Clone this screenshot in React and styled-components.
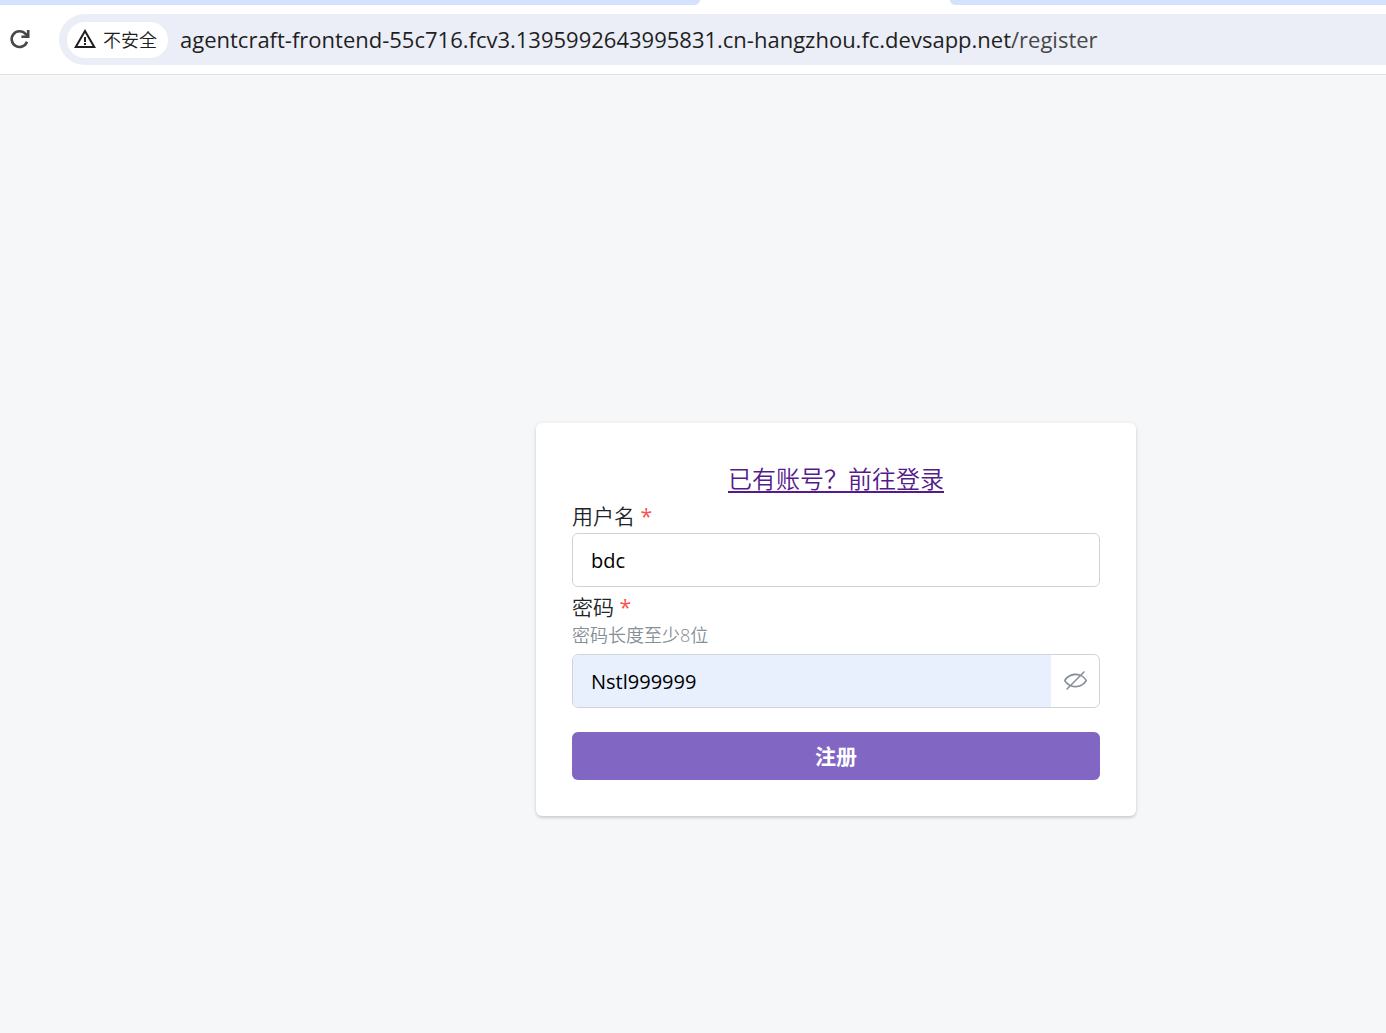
import { useState } from "react";
import { MdWarningAmber } from "react-icons/md";
import styled, { createGlobalStyle } from "styled-components";

const GlobalStyle = createGlobalStyle`
    * {
        box-sizing: border-box;
    }
    body {
        margin: 0;
        background-color: #f6f7f9;
        color: #000000;
        font-family: "Open Sans", "Noto Sans CJK SC", sans-serif;
        font-size: 21px;
    }
    input, button {
        font-family: inherit;
        font-size: inherit;
    }
`;

const Page = styled.div`
    min-height: 100vh;
    display: flex;
    flex-direction: column;
`;

const TabStrip = styled.div`
    display: grid;
    grid-template-columns: 700px 250px 1fr;
    height: 5px;
    background-color: #ffffff;
`;
const Tab = styled.div`
    background-color: ${(props) => (props.$active ? "#ffffff" : "#d3e3fd")};
    border-radius: ${(props) => props.$radius || "0"};
`;

const Toolbar = styled.header`
    display: flex;
    align-items: center;
    gap: 28px;
    height: 70px;
    padding-left: 9px;
    background-color: #ffffff;
    border-bottom: 1px solid #dfe1e5;
`;
const ReloadButton = styled.button`
    display: flex;
    padding: 0;
    border: none;
    background: none;
    color: #474747;
`;
const AddressBar = styled.div`
    flex: 1;
    display: flex;
    align-items: center;
    gap: 12px;
    height: 51px;
    padding-left: 8px;
    border-radius: 26px 0 0 26px;
    background-color: #ebeef7;
`;
const SecurityChip = styled.button`
    display: flex;
    align-items: center;
    gap: 6px;
    height: 36px;
    padding: 0 11px 2px 6px;
    border: none;
    border-radius: 18px;
    background-color: #ffffff;
    color: #1f1f1f;
    && {
        font-size: 18px;
        font-weight: 350;
    }
`;
const Url = styled.span`
    padding-bottom: 2px;
    color: #1f1f1f;
    font-size: 22px;
    white-space: nowrap;
`;
const UrlPath = styled.span`
    color: #474747;
`;

const Main = styled.main`
    flex: 1;
    display: flex;
    align-items: center;
    justify-content: center;
    padding: 131px 0 0 286px;
`;
const Card = styled.form`
    display: flex;
    flex-direction: column;
    width: 600px;
    padding: 36px;
    border-radius: 6px;
    background-color: #ffffff;
    box-shadow: 0 1px 4px rgba(0, 0, 0, 0.1), 0 2px 3px rgba(0, 0, 0, 0.1);
`;
const LoginLink = styled.a`
    align-self: center;
    color: #551a8b;
    font-size: 24px;
    font-weight: 350;
    line-height: 40px;
    text-underline-offset: 3px;
    text-decoration-thickness: 2px;
`;
const Field = styled.div`
    display: flex;
    flex-direction: column;
    margin-bottom: ${(props) => (props.$last ? "24px" : "3px")};
`;
const Label = styled.label`
    color: #212529;
    font-weight: 350;
    line-height: 34px;
`;
const Required = styled.span`
    color: #fa5252;
    font-weight: 400;
`;
const Description = styled.span`
    margin-bottom: 8px;
    color: #868e96;
    font-size: 18px;
    font-weight: 350;
    line-height: 22px;
`;
const InputBox = styled.div`
    display: flex;
    height: 54px;
    border: 1px solid #ced4da;
    border-radius: 6px;
    background-color: #ffffff;
    overflow: hidden;
`;
const Input = styled.input`
    flex: 1;
    min-width: 0;
    padding: 0 18px;
    border: none;
    outline: none;
    background-color: ${(props) => (props.$filled ? "#e8f0fe" : "transparent")};
    color: #000000;
    && {
        font-size: 20px;
    }
`;
const ToggleButton = styled.button`
    display: flex;
    align-items: center;
    justify-content: center;
    width: 48px;
    padding: 0 0 2px;
    border: none;
    background: none;
    color: #868e96;
`;
const SubmitButton = styled.button`
    height: 48px;
    padding-bottom: 4px;
    border: none;
    border-radius: 6px;
    background-color: #8167c3;
    color: #ffffff;
    font-weight: 700;
`;

function ReloadIcon() {
    return (
        <svg width="22" height="22" viewBox="0 0 22 22" fill="none" stroke="currentColor" strokeWidth="2.6">
            <path d="M18 12.8A7.9 7.9 0 1 1 16.6 5L18.8 7.2" />
            <path d="M19.2 1V7.8H12.4" />
        </svg>
    );
}

function EyeOffIcon() {
    return (
        <svg width="23" height="23" viewBox="0 0 15 15" fill="currentColor">
            <path
                fillRule="evenodd"
                clipRule="evenodd"
                d="M13.3536 2.35355C13.5488 2.15829 13.5488 1.84171 13.3536 1.64645C13.1583 1.45118 12.8417 1.45118 12.6464 1.64645L10.6828 3.61012C9.70652 3.21671 8.63759 3 7.5 3C4.30786 3 1.65639 4.70638 0.0760002 7.23501C-0.0253338 7.39715 -0.0253334 7.60288 0.0760014 7.76501C0.902945 9.08812 2.02314 10.1861 3.36061 10.9323L1.64645 12.6464C1.45118 12.8417 1.45118 13.1583 1.64645 13.3536C1.84171 13.5488 2.15829 13.5488 2.35355 13.3536L4.31723 11.3899C5.29348 11.7833 6.36241 12 7.5 12C10.6921 12 13.3436 10.2936 14.924 7.76501C15.0253 7.60288 15.0253 7.39715 14.924 7.23501C14.0971 5.9119 12.9769 4.81391 11.6394 4.06771L13.3536 2.35355ZM9.90428 4.38861C9.15332 4.1361 8.34759 4 7.5 4C4.80285 4 2.52952 5.37816 1.09622 7.50001C1.87284 8.6497 2.89609 9.58106 4.09974 10.1931L9.90428 4.38861ZM5.09572 10.6114L10.9003 4.80685C12.1039 5.41894 13.1272 6.35031 13.9038 7.50001C12.4705 9.62183 10.1971 11 7.5 11C6.65241 11 5.84668 10.8639 5.09572 10.6114Z"
            />
        </svg>
    );
}

function Browser() {
    return (
        <>
            <TabStrip>
                <Tab $radius="0 0 14px 0" />
                <Tab $active />
                <Tab $radius="0 0 0 14px" />
            </TabStrip>
            <Toolbar>
                <ReloadButton type="button" aria-label="Reload">
                    <ReloadIcon />
                </ReloadButton>
                <AddressBar>
                    <SecurityChip type="button">
                        <MdWarningAmber size={24} />
                        不安全
                    </SecurityChip>
                    <Url>
                        agentcraft-frontend-55c716.fcv3.1395992643995831.cn-hangzhou.fc.devsapp.net
                        <UrlPath>/register</UrlPath>
                    </Url>
                </AddressBar>
            </Toolbar>
        </>
    );
}

function App() {
    const [username, setUsername] = useState("bdc");
    const [password, setPassword] = useState("Nstl999999");
    const [visible, setVisible] = useState(true);
    return (
        <Page>
            <GlobalStyle />
            <Browser />
            <Main>
                <Card onSubmit={(event) => event.preventDefault()}>
                    <LoginLink href="#login">已有账号？前往登录</LoginLink>
                    <Field>
                        <Label htmlFor="username">
                            用户名 <Required>*</Required>
                        </Label>
                        <InputBox>
                            <Input
                                id="username"
                                value={username}
                                onChange={(event) => setUsername(event.target.value)}
                            />
                        </InputBox>
                    </Field>
                    <Field $last>
                        <Label htmlFor="password">
                            密码 <Required>*</Required>
                        </Label>
                        <Description id="password-hint">密码长度至少8位</Description>
                        <InputBox>
                            <Input
                                id="password"
                                type={visible ? "text" : "password"}
                                aria-describedby="password-hint"
                                value={password}
                                onChange={(event) => setPassword(event.target.value)}
                                $filled
                            />
                            <ToggleButton
                                type="button"
                                aria-label="Toggle password visibility"
                                onClick={() => setVisible(!visible)}
                            >
                                <EyeOffIcon />
                            </ToggleButton>
                        </InputBox>
                    </Field>
                    <SubmitButton type="submit">注册</SubmitButton>
                </Card>
            </Main>
        </Page>
    );
}

export default App;
